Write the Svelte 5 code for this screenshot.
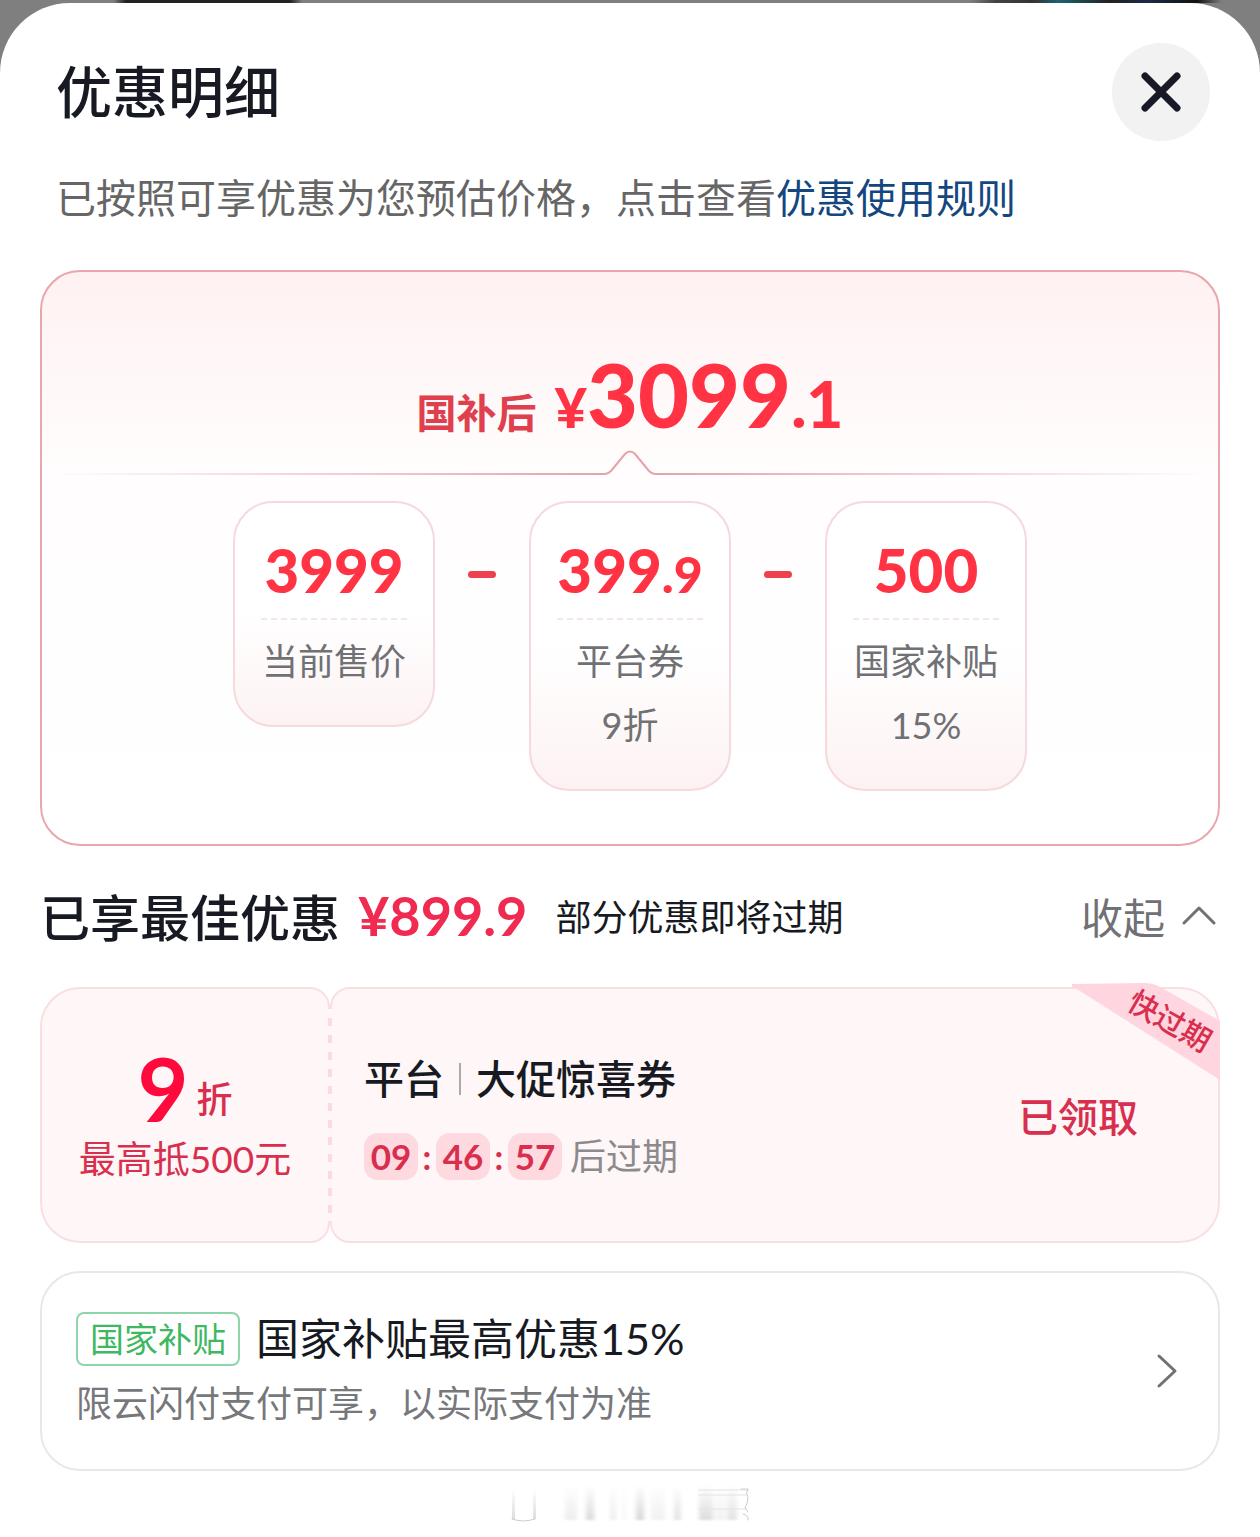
<script>
  const parts = [
    { whole: '3999', label: '当前售价' },
    { whole: '399', cents: '.9', label: '平台券', note: '9折' },
    { whole: '500', label: '国家补贴', note: '15%' }
  ]
  const countdown = ['09', '46', '57']

  // x, width, opacity of the faded strokes in the footer mark
  const strokes = [
    [56, 12, 0.1], [77, 8, 0.22], [101, 6, 0.1], [113, 4, 0.05], [127, 8, 0.24],
    [142, 14, 0.08], [165, 7, 0.17], [190, 14, 0.2], [206, 10, 0.08], [218, 10, 0.16]
  ]

  let open = $state(true)
</script>

<div class="backdrop"></div>
<main class="sheet">
  <header class="sheet_header">
    <h1>优惠明细</h1>
    <button class="close" type="button" aria-label="关闭">
      <svg viewBox="0 0 40 40" width="40" height="40">
        <path d="M4 4 L36 36 M36 4 L4 36" />
      </svg>
    </button>
  </header>
  <p class="intro">已按照可享优惠为您预估价格，点击查看<a href="#rules">优惠使用规则</a></p>

  <section class="price">
    <div class="total">
      <span class="total_label">国补后</span>
      <span class="total_value"><span class="yen">¥</span>3099<span class="cents">.1</span></span>
    </div>
    <div class="divider">
      <span class="line"></span>
      <svg viewBox="0 0 54 26" width="54" height="26">
        <path d="M0 25 H2 Q5 25 8 22 L22 5 Q27 0 32 5 L46 22 Q49 25 52 25 H54" />
      </svg>
      <span class="line right"></span>
    </div>
    <div class="formula">
      {#each parts as part, i}
        {#if i > 0}
          <span class="minus"></span>
        {/if}
        <div class="part">
          <strong>{part.whole}{#if part.cents}<small>{part.cents}</small>{/if}</strong>
          <span class="part_label">{part.label}</span>
          {#if part.note}
            <span>{part.note}</span>
          {/if}
        </div>
      {/each}
    </div>
  </section>

  <div class="best">
    <h2>已享最佳优惠</h2>
    <span class="best_value">¥899.9</span>
    <span class="best_note">部分优惠即将过期</span>
    <button class="toggle" type="button" aria-expanded={open} onclick={() => (open = !open)}>
      收起
      <svg class:flipped={!open} viewBox="0 0 36 22" width="36" height="22">
        <path d="M3 19 L18 4 L33 19" />
      </svg>
    </button>
  </div>

  {#if open}
    <article class="ticket">
      <div class="ticket_left">
        <div class="discount"><b>9</b><span>折</span></div>
        <span class="limit">最高抵500元</span>
      </div>
      <div class="ticket_right">
        <div class="ticket_info">
          <h3>平台<i></i>大促惊喜券</h3>
          <div class="countdown">
            {#each countdown as value, i}
              {#if i > 0}
                <span class="colon">:</span>
              {/if}
              <b>{value}</b>
            {/each}
            <span class="expire">后过期</span>
          </div>
        </div>
        <span class="received">已领取</span>
      </div>
      <svg class="ribbon" viewBox="0 0 148 98" width="148" height="98">
        <path d="M0 1 L72 0 Q82 0 90 5 L148 38 V97 L8 8 Q3 5 0 4 Z" />
        <text x="98" y="49" text-anchor="middle" transform="rotate(30 98 38)">快过期</text>
      </svg>
    </article>

    <a class="subsidy" href="#subsidy">
      <div>
        <div class="subsidy_title">
          <span class="tag">国家补贴</span>
          <span>国家补贴最高优惠15%</span>
        </div>
        <p>限云闪付支付可享，以实际支付为准</p>
      </div>
      <svg viewBox="0 0 22 36" width="22" height="36">
        <path d="M3 3 L19 18 L3 33" />
      </svg>
    </a>
  {/if}

  <svg class="mark" viewBox="0 0 242 44" width="242" height="44" aria-hidden="true">
    <defs>
      <linearGradient id="fade" x1="0" y1="0" x2="0" y2="1">
        <stop offset="0" stop-color="#555" stop-opacity="0" />
        <stop offset="1" stop-color="#555" />
      </linearGradient>
      <filter id="soft" x="-50%" width="200%">
        <feGaussianBlur stdDeviation="2 1" />
      </filter>
    </defs>
    {#each strokes as [x, width, opacity]}
      <rect {x} y="4" {width} height="35" fill="url(#fade)" {opacity} filter="url(#soft)" />
    {/each}
    <rect x="3" y="8" width="3" height="30" fill="url(#fade)" opacity="0.2" />
    <rect x="24" y="8" width="3" height="30" fill="url(#fade)" opacity="0.2" />
    <path d="M3 38 Q14 42 26 38" stroke="#ccc" fill="none" />
    <path d="M190 9 H239 M190 14 H237 M190 28 H237" stroke="#e4e4e4" stroke-width="2" fill="none" opacity="0.5" />
    <path d="M232 8 H239 Q236 12 239 16 Q239 22 236 27 L239 31 M234 33 Q240 34 239 39" stroke="#ccc" fill="none" />
  </svg>
</main>

<style>
  :global(body) {
    background: #7f7f7f;
  }

  .backdrop {
    height: 3px;
    background: linear-gradient(90deg,
      #7f7f7f 9%, #222 10%, #222 23%, #7f7f7f 24%, #7f7f7f 77%,
      #444 79%, #333 82%, #1d6272 84%, #222 88%, #1c2a4a 91%, #111 95%, #7f7f7f 97%);
  }

  .sheet {
    box-sizing: border-box;
    min-height: calc(100vh - 3px);
    padding: 40px 40px 8px;
    border-radius: 70px 70px 0 0;
    background: #fff;
    color: #171a22;
    font-family: Lato, "Noto Sans CJK SC", sans-serif;
  }

  h1, h2, h3, p {
    margin: 0;
    font-weight: 500;
  }

  svg path {
    stroke-linecap: round;
    stroke-linejoin: round;
  }

  .sheet_header {
    display: flex;
    justify-content: space-between;
    align-items: center;
    padding: 0 10px 0 16px;
  }

  h1 {
    font-size: 56px;
    line-height: 80px;
  }

  .close {
    display: flex;
    align-items: center;
    justify-content: center;
    width: 98px;
    height: 98px;
    padding: 0;
    border: 0;
    border-radius: 50%;
    background: #f2f2f2;
  }

  .close path {
    fill: none;
    stroke: #171a26;
    stroke-width: 7;
  }

  .intro {
    margin-top: 29px;
    padding: 0 16px;
    color: #666;
    font-size: 40px;
    font-weight: 400;
    line-height: 56px;
  }

  .intro a {
    color: #14477f;
    text-decoration: none;
  }

  .price {
    margin-top: 44px;
    padding: 80px 0 53px;
    border: 2px solid #e9a6ab;
    border-radius: 40px;
    background: linear-gradient(#fff1f2, #fffdfd 200px, #fff);
  }

  .total {
    display: flex;
    justify-content: center;
    align-items: baseline;
    gap: 18px;
    height: 97px;
    color: #ff3344;
    line-height: 84px;
  }

  .total_label {
    color: #e0404d;
    font-size: 40px;
    font-weight: 700;
  }

  .total_value {
    font-size: 88px;
    font-weight: 900;
  }

  .yen {
    font-size: 56px;
  }

  .cents {
    font-size: 64px;
  }

  .divider {
    display: flex;
    align-items: flex-end;
  }

  .divider path {
    fill: none;
    stroke: #e5a3aa;
    stroke-width: 2;
  }

  .line {
    flex: 1;
    height: 2px;
    background: linear-gradient(90deg, #fff, #e5a3aa);
  }

  .line.right {
    background: linear-gradient(270deg, #fff, #e5a3aa);
  }

  .formula {
    display: flex;
    justify-content: center;
    align-items: flex-start;
    gap: 33px;
    margin-top: 26px;
  }

  .minus {
    width: 28px;
    height: 7px;
    margin-top: 70px;
    border-radius: 4px;
    background: #ef404e;
  }

  .part {
    display: flex;
    flex-direction: column;
    align-items: center;
    box-sizing: border-box;
    min-width: 202px;
    padding: 35px 26px 32px;
    border: 2px solid #f5d9dc;
    border-radius: 40px;
    background: linear-gradient(#fff 50%, #fdf2f3);
    color: #707174;
    font-size: 36px;
    line-height: 64px;
  }

  .part strong {
    color: #ff3344;
    font-size: 60px;
    font-weight: 900;
  }

  .part small {
    font-size: 50px;
    line-height: 1;
  }

  .part_label {
    align-self: stretch;
    margin-top: 16px;
    padding-top: 9px;
    border-top: 2px dashed #f5e6e8;
    text-align: center;
  }

  .best {
    display: flex;
    align-items: center;
    height: 70px;
    margin: 34px 0 37px;
  }

  h2 {
    font-size: 50px;
  }

  .best_value {
    margin-left: 18px;
    color: #f02a50;
    font-size: 54px;
    font-weight: 700;
  }

  .best_note {
    margin-left: 28px;
    font-size: 36px;
  }

  .toggle {
    display: flex;
    align-items: center;
    gap: 16px;
    margin-left: auto;
    padding: 0 3px;
    border: 0;
    background: none;
    color: #707174;
    font: inherit;
    font-size: 42px;
  }

  .toggle path, .subsidy path {
    fill: none;
    stroke: #707174;
    stroke-width: 3;
  }

  .flipped {
    transform: rotate(180deg);
  }

  .ticket {
    position: relative;
    display: flex;
    height: 256px;
    color: #d92f4f;
  }

  .ticket_left, .ticket_right {
    box-sizing: border-box;
    border: 2px solid #fadfe2;
    background: #fef6f7;
  }

  .ticket_left {
    position: relative;
    display: flex;
    flex-direction: column;
    align-items: center;
    width: 290px;
    padding-top: 56px;
    border-radius: 40px 20px 20px 40px;
  }

  /* perforation between the two halves */
  .ticket_left::after {
    content: '';
    position: absolute;
    z-index: 1;
    top: 20px;
    right: -4px;
    bottom: 20px;
    width: 4px;
    background: repeating-linear-gradient(#fef6f7 0 9px, #fadbe0 9px 17px);
  }

  .discount {
    display: flex;
    align-items: flex-end;
    gap: 8px;
    line-height: 86px;
  }

  .discount b {
    color: #ff0a3c;
    font-size: 88px;
  }

  .discount span {
    font-size: 36px;
    font-weight: 500;
    line-height: 64px;
  }

  .limit {
    margin-top: 3px;
    font-size: 37px;
    line-height: 50px;
  }

  .ticket_right {
    display: flex;
    flex: 1;
    align-items: center;
    justify-content: space-between;
    padding: 0 80px 0 32px;
    border-radius: 20px 40px 40px 20px;
  }

  h3 {
    display: flex;
    align-items: center;
    color: #171a22;
    font-size: 40px;
    line-height: 56px;
  }

  h3 i {
    width: 2px;
    height: 32px;
    margin: 0 15px;
    background: #aaa;
  }

  .countdown {
    display: flex;
    align-items: center;
    margin-top: 26px;
    line-height: 47px;
  }

  .countdown b {
    width: 54px;
    border-radius: 14px;
    background: #ffd9e0;
    font-size: 35px;
    text-align: center;
  }

  .colon {
    width: 18px;
    font-size: 34px;
    font-weight: 700;
    text-align: center;
  }

  .expire {
    margin-left: 8px;
    color: #8c8a8d;
    font-size: 36px;
  }

  .received {
    font-size: 40px;
    font-weight: 500;
  }

  .ribbon {
    position: absolute;
    top: -4px;
    right: 0;
  }

  .ribbon path {
    fill: #ffd6df;
  }

  .ribbon text {
    fill: #d92f4f;
    font-size: 30px;
    font-weight: 500;
  }

  .subsidy {
    display: flex;
    align-items: center;
    justify-content: space-between;
    margin-top: 28px;
    padding: 34px 40px 34px 34px;
    border: 2px solid #e8e8e8;
    border-radius: 40px;
    color: #171a22;
    text-decoration: none;
  }

  .subsidy_title {
    display: flex;
    align-items: center;
    gap: 16px;
    font-size: 43px;
    line-height: 64px;
  }

  .tag {
    padding: 0 12px;
    border: 2px solid #8ed5a9;
    border-radius: 8px;
    color: #3fb862;
    font-size: 34px;
    line-height: 50px;
  }

  .subsidy p {
    color: #77787b;
    font-size: 36px;
    font-weight: 400;
    line-height: 64px;
  }

  .mark {
    display: block;
    margin: 10px auto 0;
  }
</style>
